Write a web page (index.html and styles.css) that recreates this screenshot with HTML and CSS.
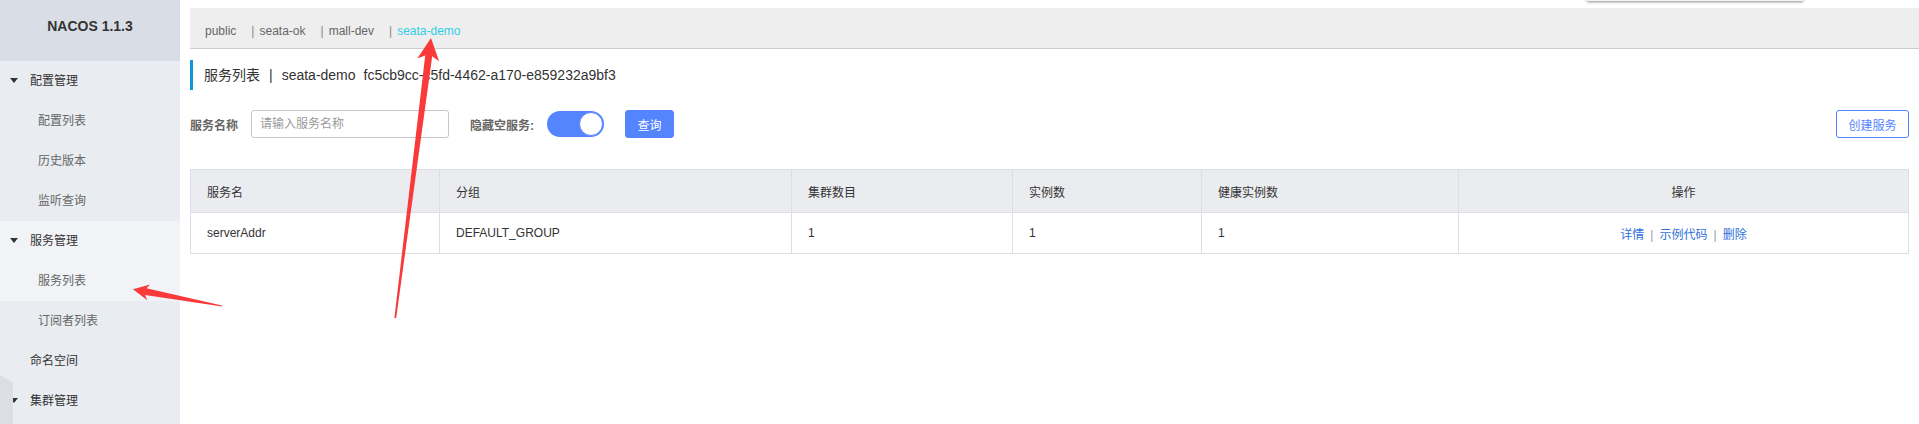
FILE: index.html
```html
<!DOCTYPE html>
<html lang="zh-CN">
<head>
<meta charset="utf-8">
<title>Nacos</title>
<link rel="stylesheet" href="styles.css">
</head>
<body>
<div class="app">
  <aside class="sidebar">
    <div class="nav-title">NACOS 1.1.3</div>
    <ul class="nav">
      <li class="nav-group"><span class="tri"></span>配置管理</li>
      <li class="nav-sub">配置列表</li>
      <li class="nav-sub">历史版本</li>
      <li class="nav-sub">监听查询</li>
      <li class="nav-group hl"><span class="tri"></span>服务管理</li>
      <li class="nav-sub hl">服务列表</li>
      <li class="nav-sub">订阅者列表</li>
      <li class="nav-item">命名空间</li>
      <li class="nav-group"><span class="tri"></span>集群管理</li>
    </ul>
    <div class="float-hex"></div>
  </aside>
  <main class="main">
    <div class="ns-bar"><span class="ns-item">public</span><span class="ns-sep">|</span><span class="ns-item">seata-ok</span><span class="ns-sep">|</span><span class="ns-item">mall-dev</span><span class="ns-sep">|</span><span class="ns-item ns-current">seata-demo</span></div>
    <div class="content">
      <h1 class="page-title">
        <span>服务列表</span><span class="title-sep">|</span><span>seata-demo</span><span class="title-id">fc5cb9cc-c5fd-4462-a170-e859232a9bf3</span>
      </h1>
      <div class="search-row">
        <label class="form-label">服务名称</label>
        <input class="text-input" type="text" placeholder="请输入服务名称">
        <label class="form-label label-gap">隐藏空服务:</label>
        <span class="switch"><span class="knob"></span></span>
        <button class="btn btn-primary">查询</button>
        <span class="spacer"></span>
        <button class="btn btn-outline">创建服务</button>
      </div>
      <table class="svc-table">
        <colgroup>
          <col class="c1"><col class="c2"><col class="c3"><col class="c4"><col class="c5"><col class="c6">
        </colgroup>
        <thead>
          <tr><th>服务名</th><th>分组</th><th>集群数目</th><th>实例数</th><th>健康实例数</th><th class="center">操作</th></tr>
        </thead>
        <tbody>
          <tr>
            <td>serverAddr</td><td>DEFAULT_GROUP</td><td>1</td><td>1</td><td>1</td>
            <td class="center"><a class="link">详情</a><span class="op-sep">|</span><a class="link">示例代码</a><span class="op-sep">|</span><a class="link">删除</a></td>
          </tr>
        </tbody>
      </table>
    </div>
  </main>
</div>
<div class="top-dropdown"></div>
<svg class="annot" width="1919" height="424" viewBox="0 0 1919 424">
  <polygon fill="#fa3a3a" points="394.4,318 396.2,318 432.2,56.2 439.1,61.2 431,38 417.3,58.4 425.2,55.4"/>
  <polygon fill="#fa3a3a" points="222,306.6 222,305.4 146.5,288.3 150.2,284.4 133,289.3 147.2,300.2 145.1,295.1"/>
</svg>
</body>
</html>
```
FILE: styles.css
```css
* { box-sizing: border-box; }
html, body { margin: 0; padding: 0; background: #fff; }
body {
  font-family: "Liberation Sans", "Noto Sans CJK SC", sans-serif;
  font-size: 12px;
  color: #333;
  width: 1919px;
  height: 424px;
  overflow: hidden;
  position: relative;
}
.app { display: flex; height: 424px; }

.sidebar {
  width: 180px;
  flex: 0 0 180px;
  background: #e9ecf1;
  position: relative;
  overflow: hidden;
}
.nav-title {
  height: 61px;
  background: #d9dee6;
  padding-top: 18px;
  line-height: 16px;
  text-align: center;
  font-size: 14px;
  font-weight: bold;
  color: #333;
}
.nav { list-style: none; margin: 0; padding: 0; }
.nav li { height: 40px; line-height: 40px; font-size: 12px; }
.nav-group, .nav-item { padding-left: 30px; color: #333; position: relative; }
.nav-sub { padding-left: 38px; color: #666; }
.nav .hl { background: #f2f3f7; }
.tri {
  position: absolute;
  left: 10px;
  top: 17px;
  width: 0; height: 0;
  border-left: 4.5px solid transparent;
  border-right: 4.5px solid transparent;
  border-top: 5px solid #333;
}
.float-hex {
  position: absolute;
  left: 0;
  top: 375px;
  width: 13px;
  height: 49px;
  background: #dcdee3;
  clip-path: polygon(0 0, 100% 16%, 100% 100%, 0 100%);
}

.main { flex: 1; padding: 8px 0 0 10px; min-width: 0; }
.ns-bar {
  height: 41px;
  background: #eeeeee;
  border-bottom: 1px solid #cccccc;
  padding-left: 15px;
  line-height: 46px;
  font-size: 12px;
  color: #666;
  white-space: nowrap;
}
.ns-item { margin-right: 15px; }
.ns-sep { margin-right: 5px; color: #888; }
.ns-current { color: #33cde5; }

.content { padding-right: 10px; }
.page-title {
  margin: 11px 0 0 0;
  height: 30px;
  line-height: 30px;
  border-left: 3px solid #1296db;
  padding-left: 11px;
  font-size: 14px;
  font-weight: normal;
  color: #333;
  white-space: nowrap;
}
.title-sep { margin: 0 9px 0 9px; }
.title-id { margin-left: 8px; }

.search-row {
  display: flex;
  align-items: center;
  margin-top: 20px;
  height: 28px;
}
.form-label { font-size: 12px; font-weight: bold; color: #666; margin-right: 13px; }
.label-gap { margin-left: 21px; }
.text-input {
  width: 198px;
  height: 28px;
  border: 1px solid #c4c6cf;
  border-radius: 3px;
  padding: 0 8px;
  font-family: inherit;
  font-size: 12px;
  color: #333;
  outline: none;
}
.text-input::placeholder { color: #999; }
.switch {
  width: 57px;
  height: 26px;
  border-radius: 13px;
  background: #5584ff;
  display: flex;
  align-items: center;
  justify-content: flex-end;
  padding-right: 1px;
}
.knob {
  width: 24px;
  height: 24px;
  border-radius: 50%;
  background: #fff;
  border: 1px solid #5584ff;
}
.btn {
  height: 28px;
  border-radius: 3px;
  font-family: inherit;
  font-size: 12px;
  padding: 0;
  cursor: pointer;
}
.btn-primary {
  margin-left: 21px;
  width: 49px;
  background: #5584ff;
  border: 1px solid #5584ff;
  color: #fff;
}
.spacer { flex: 1; }
.btn-outline {
  width: 73px;
  background: #fff;
  border: 1px solid #5584ff;
  color: #5584ff;
}

.svc-table {
  margin-top: 31px;
  width: 100%;
  table-layout: fixed;
  border-collapse: collapse;
  border: 1px solid #dcdee3;
}
.c1 { width: 249px; }
.c2 { width: 352px; }
.c3 { width: 221px; }
.c4 { width: 189px; }
.c5 { width: 257px; }
.svc-table th, .svc-table td {
  border: 1px solid #dcdee3;
  padding: 0 16px;
  text-align: left;
  font-size: 12px;
  color: #333;
}
.svc-table th {
  height: 43px;
  background: #ebecf0;
  font-weight: normal;
}
.svc-table td { height: 41px; background: #fff; }
.svc-table .center { text-align: center; }
.link { color: #2f70d8; cursor: pointer; }
.op-sep { margin: 0 6px; color: #999; }

.top-dropdown {
  position: absolute;
  left: 1587px;
  top: -8px;
  width: 216px;
  height: 9px;
  background: #f4f4f4;
  box-shadow: 0 1px 3px rgba(0,0,0,0.45);
}
.annot {
  position: absolute;
  left: 0;
  top: 0;
  pointer-events: none;
}
```
